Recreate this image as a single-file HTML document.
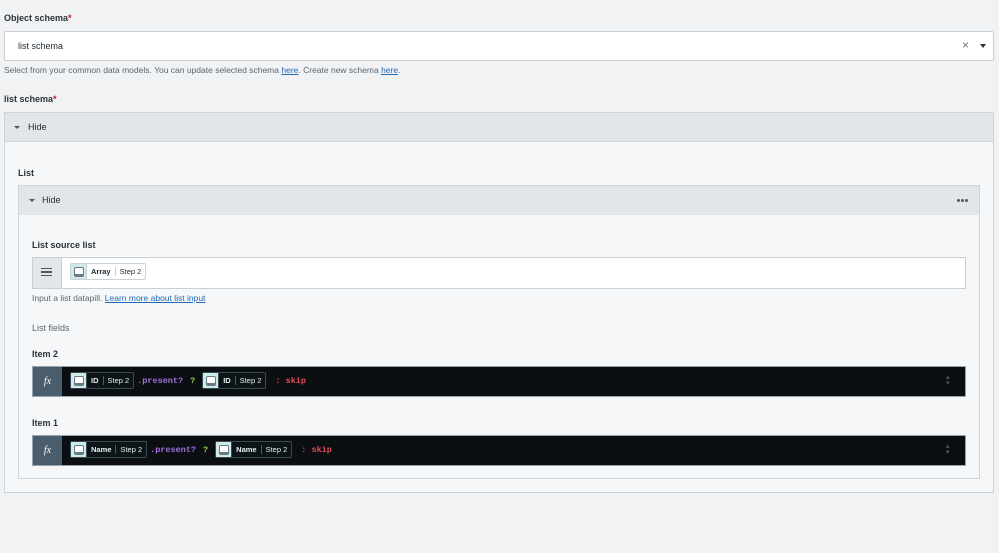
<!DOCTYPE html>
<html><head><style>
*{box-sizing:border-box;margin:0;padding:0}
body{width:999px;height:553px;background:#f1f2f4;font-family:"Liberation Sans",sans-serif;font-size:9px;color:#1f2a33;position:relative;overflow:hidden}
.a{position:absolute}
.lbl{font-weight:bold;font-size:9px;color:#2a333b}
.req{color:#c8102e}
.help{color:#5a6670;font-size:8.5px}
.help u{color:#1f6bb6}
.pill{display:inline-flex;align-items:center;height:17px;border:1px solid #c8d2da;border-radius:2px;background:#fff;font-size:7.5px;vertical-align:middle}
.pill .ic{width:16px;height:15px;background:#cdeae8;border-right:1px solid #c8d2da;display:flex;align-items:center;justify-content:center}
.pill .ic i{display:block;width:10px;height:10px;border:1px solid #6a7a84;border-radius:2px;background:#fff;border-bottom-width:3px}
.pill b{padding:0 4px;font-weight:bold}
.pill s{text-decoration:none;border-left:1px solid #c8d2da;padding:0 4px}
.dark .pill{background:#0c1418;border-color:#3a4a55;color:#e6eef2}
.dark .pill s{border-color:#556}
.dark .pill .ic{border-color:#3a4a55}
.code{font-family:"Liberation Mono",monospace;font-weight:bold;font-size:8.5px}
.dot{position:absolute;width:3px;height:3px;border-radius:50%;background:#556}
</style></head><body>
<div class="a lbl" style="left:4px;top:13px">Object schema<span class="req">*</span></div>
<div class="a" style="left:4px;top:31px;width:990px;height:30px;background:#fff;border:1px solid #c9cfd5;border-radius:2px"></div>
<div class="a" style="left:18px;top:41px;font-size:9px">list schema</div>
<div class="a" style="left:962px;top:38px;font-size:12px;color:#6a747c">×</div>
<div class="a" style="left:980px;top:44px;width:0;height:0;border-left:3.5px solid transparent;border-right:3.5px solid transparent;border-top:4px solid #333"></div>
<div class="a help" style="left:4px;top:65px">Select from your common data models. You can update selected schema <u>here</u>. Create new schema <u>here</u>.</div>
<div class="a lbl" style="left:4px;top:94px">list schema<span class="req">*</span></div>

<div class="a" style="left:4px;top:112px;width:990px;height:381px;background:#f6f7f9;border:1px solid #cfd4d9"></div>
<div class="a" style="left:5px;top:113px;width:988px;height:29px;background:#e3e6e9;border-bottom:1px solid #d5d9dd"></div>
<div class="a" style="left:14px;top:126px;border-left:3px solid transparent;border-right:3px solid transparent;border-top:3px solid #555"></div>
<div class="a" style="left:28px;top:122px">Hide</div>

<div class="a lbl" style="left:18px;top:168px">List</div>
<div class="a" style="left:18px;top:185px;width:962px;height:294px;background:#f6f7f9;border:1px solid #cfd4d9"></div>
<div class="a" style="left:19px;top:186px;width:960px;height:29px;background:#e3e6e9"></div>
<div class="a" style="left:29px;top:199px;border-left:3px solid transparent;border-right:3px solid transparent;border-top:3px solid #555"></div>
<div class="a" style="left:42px;top:195px">Hide</div>
<div class="dot" style="left:957px;top:199px"></div><div class="dot" style="left:961px;top:199px"></div><div class="dot" style="left:965px;top:199px"></div>

<div class="a lbl" style="left:32px;top:240px">List source list</div>
<div class="a" style="left:32px;top:257px;width:934px;height:32px;background:#fff;border:1px solid #c9cfd5"></div>
<div class="a" style="left:33px;top:258px;width:29px;height:30px;background:#e3e6e9;border-right:1px solid #c9cfd5"></div>
<div class="a" style="left:41px;top:268px;width:11px;height:8px;border-top:1px solid #555;border-bottom:1px solid #555"></div>
<div class="a" style="left:41px;top:271px;width:11px;height:2px;border-top:1px solid #555;border-bottom:1px solid #555"></div>
<div class="a" style="left:70px;top:263px"><span class="pill"><span class="ic"><i></i></span><b>Array</b><s>Step 2</s></span></div>
<div class="a help" style="left:32px;top:293px">Input a list datapill. <u>Learn more about list input</u></div>
<div class="a" style="left:32px;top:323px;color:#5a6670">List fields</div>

<div class="a lbl" style="left:32px;top:349px">Item 2</div>
<div class="a dark" style="left:32px;top:366px;width:934px;height:31px;background:#0b0f12;border:1px solid #9aa4ac"></div>
<div class="a" style="left:33px;top:367px;width:29px;height:29px;background:#4a5d6c;color:#fff;font-style:italic;font-family:'Liberation Serif',serif;font-size:10px;text-align:center;line-height:29px">fx</div>
<div class="a dark" style="left:70px;top:372px;display:flex;align-items:center;gap:3px"><span class="pill"><span class="ic"><i></i></span><b>ID</b><s>Step 2</s></span><span class="code" style="color:#a070e0">.present?</span><span class="code" style="color:#9cd24a;margin:0 4px">?</span><span class="pill"><span class="ic"><i></i></span><b>ID</b><s>Step 2</s></span><span class="code" style="color:#e84a5a;margin-left:6px">: skip</span></div>

<div class="a lbl" style="left:32px;top:418px">Item 1</div>
<div class="a dark" style="left:32px;top:435px;width:934px;height:31px;background:#0b0f12;border:1px solid #9aa4ac"></div>
<div class="a" style="left:33px;top:436px;width:29px;height:29px;background:#4a5d6c;color:#fff;font-style:italic;font-family:'Liberation Serif',serif;font-size:10px;text-align:center;line-height:29px">fx</div>
<div class="a dark" style="left:70px;top:441px;display:flex;align-items:center;gap:3px"><span class="pill"><span class="ic"><i></i></span><b>Name</b><s>Step 2</s></span><span class="code" style="color:#a070e0">.present?</span><span class="code" style="color:#9cd24a;margin:0 4px">?</span><span class="pill"><span class="ic"><i></i></span><b>Name</b><s>Step 2</s></span><span class="code" style="color:#e84a5a;margin-left:6px">: skip</span></div>
<div class="a" style="left:946px;top:375px;color:#556;font-size:7px;line-height:6px">▴<br>▾</div>
<div class="a" style="left:946px;top:444px;color:#556;font-size:7px;line-height:6px">▴<br>▾</div>
</body></html>
